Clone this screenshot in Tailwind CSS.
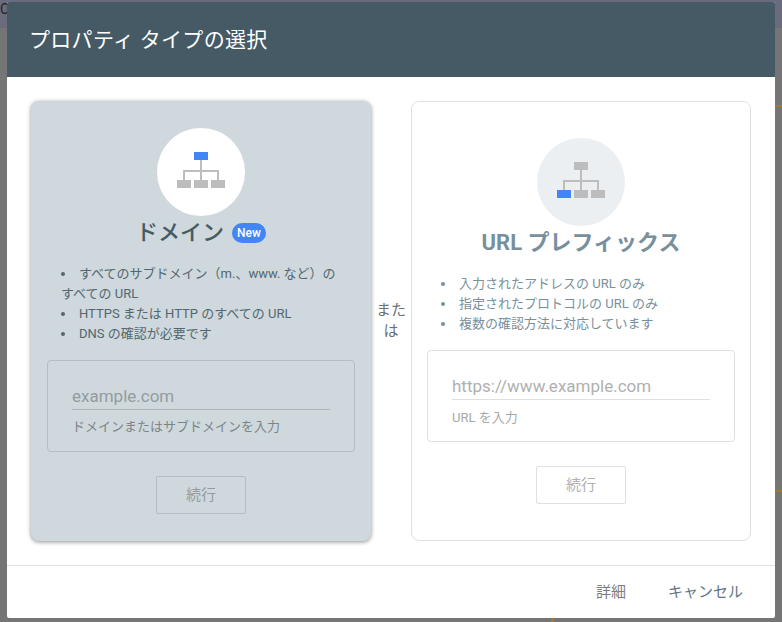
<!DOCTYPE html>
<html lang="ja">
<head>
  <meta charset="UTF-8" />
  <title>プロパティ タイプの選択</title>
  <script src="https://cdn.jsdelivr.net/npm/@tailwindcss/browser@4"></script>
</head>
<body class="w-[782px] h-[622px] overflow-hidden relative bg-[#757575] font-['Roboto','Noto_Sans_CJK_JP',sans-serif]">
  <!-- page behind the dialog -->
  <div class="absolute inset-x-0 top-0 h-[28px] bg-[#6b6b80]"></div>
  <span class="absolute left-0 top-[1px] text-[14px] leading-[16px] text-[#222222]">C</span>
  <div class="absolute right-0 top-[105px] w-[7px] h-[2px] bg-[#a8792c]"></div>
  <div class="absolute right-0 top-[490px] w-[7px] h-[2px] bg-[#a8792c]"></div>
  <div class="absolute left-[551px] bottom-0 w-[3px] h-[4px] bg-[#a8792c]"></div>

  <div class="absolute left-[7px] top-[2px] w-[768px] h-[616px] bg-white rounded-[2px] flex flex-col overflow-hidden">
    <header class="h-[75px] shrink-0 bg-[#455a64] text-white text-[21px] tracking-[0.3px] leading-[77px] pl-[22px]">プロパティ タイプの選択</header>

    <div class="h-[488px] shrink-0 pt-[24px] pl-[24px] flex items-start">
      <!-- domain -->
      <section class="w-[340px] h-[440px] bg-[#cfd8dc] rounded-[8px] shadow-[0_1px_4px_rgba(0,0,0,0.45)] flex flex-col items-center pt-[27px] px-[16px]">
        <div class="w-[88px] h-[88px] rounded-full bg-white flex items-center justify-center">
          <svg class="mb-[4px]" width="48" height="36" viewBox="0 0 48 36">
            <rect x="17" y="0" width="14" height="8" fill="#4285f4"/>
            <path d="M24 8V28M7 28V19H41V28" fill="none" stroke="#bdbdbd" stroke-width="2"/>
            <rect x="0" y="28" width="14" height="8" fill="#bdbdbd"/>
            <rect x="17" y="28" width="14" height="8" fill="#bdbdbd"/>
            <rect x="34" y="28" width="14" height="8" fill="#bdbdbd"/>
          </svg>
        </div>
        <div class="flex items-center h-[34px]">
          <h2 class="text-[22px] font-medium text-[#455a64] leading-[34px]">ドメイン</h2>
          <span class="ml-[8px] h-[20px] px-[5px] rounded-[10px] bg-[#4285f4] text-white text-[12px] font-medium leading-[20px]">New</span>
        </div>
        <ul class="self-stretch mt-[14px] pl-[14px] pr-[14px] text-[13px] leading-[20px] text-[#526770] list-disc list-inside">
          <li>すべてのサブドメイン（m.、www. など）のすべての URL</li>
          <li>HTTPS または HTTP のすべての URL</li>
          <li>DNS の確認が必要です</li>
        </ul>
        <div class="self-stretch h-[92px] mt-[16px] border border-[#b4bdc1] rounded-[4px] px-[24px] pt-[23px]">
          <div class="text-[17px] leading-[24px] text-[#949ca0] border-b border-[#aeb6ba] h-[26px]">example.com</div>
          <div class="text-[13px] leading-[18px] text-[#7b8488] mt-[8px]">ドメインまたはサブドメインを入力</div>
        </div>
        <button class="w-[90px] h-[38px] mt-[24px] border border-[#b4bdc1] rounded-[2px] text-[15px] text-[#949ca0]">続行</button>
      </section>

      <div class="w-[40px] shrink-0 self-center text-center text-[15px] leading-[21px] text-[#6b6f73] px-[3px] mt-[-24px]">または</div>

      <!-- url prefix -->
      <section class="w-[340px] h-[440px] bg-white border border-[#e0e0e0] rounded-[8px] flex flex-col items-center pt-[36px] px-[15px]">
        <div class="w-[88px] h-[88px] rounded-full bg-[#eceff1] flex items-center justify-center">
          <svg class="mb-[4px]" width="48" height="36" viewBox="0 0 48 36">
            <rect x="17" y="0" width="14" height="8" fill="#bdbdbd"/>
            <path d="M24 8V28M7 28V19H41V28" fill="none" stroke="#bdbdbd" stroke-width="2"/>
            <rect x="0" y="28" width="14" height="8" fill="#4285f4"/>
            <rect x="17" y="28" width="14" height="8" fill="#bdbdbd"/>
            <rect x="34" y="28" width="14" height="8" fill="#bdbdbd"/>
          </svg>
        </div>
        <h2 class="text-[22px] font-bold text-[#78909c] leading-[34px]">URL プレフィックス</h2>
        <ul class="self-stretch mt-[14px] pl-[14px] text-[13px] leading-[20px] text-[#78909c] list-disc list-inside">
          <li>入力されたアドレスの URL のみ</li>
          <li>指定されたプロトコルの URL のみ</li>
          <li>複数の確認方法に対応しています</li>
        </ul>
        <div class="self-stretch h-[92px] mt-[16px] border border-[#e0e0e0] rounded-[4px] px-[24px] pt-[23px]">
          <div class="text-[17px] leading-[24px] text-[#b0b0b0] border-b border-[#e0e0e0] h-[26px]">https://www.example.com</div>
          <div class="text-[13px] leading-[18px] text-[#a8a8a8] mt-[9px]">URL を入力</div>
        </div>
        <button class="w-[90px] h-[38px] mt-[24px] border border-[#e0e0e0] rounded-[2px] text-[15px] text-[#b0b0b0]">続行</button>
      </section>
    </div>

    <footer class="flex-1 border-t border-[#e0e0e0] flex items-center justify-end pr-[32px] text-[15px]">
      <span class="text-[#7d7d7d]">詳細</span>
      <span class="ml-[42px] text-[#5f7783]">キャンセル</span>
    </footer>
  </div>
</body>
</html>
